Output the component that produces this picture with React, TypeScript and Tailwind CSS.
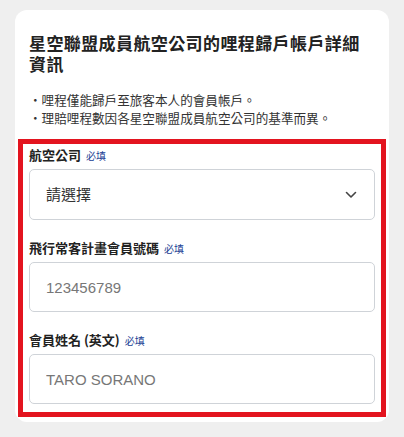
import React from "react";

const font = { fontFamily: '"Noto Sans CJK TC", "Noto Sans", "Liberation Sans", sans-serif' };

function Required() {
  return <span className="ml-[5px] text-[10px] font-normal text-[#1c3f94]">必填</span>;
}

function Label({ children }: { children: React.ReactNode }) {
  return (
    <div className="flex items-baseline text-[13px] leading-[18px] font-bold text-[#222]">
      {children}
      <Required />
    </div>
  );
}

function TextInput({ placeholder }: { placeholder: string }) {
  return (
    <input
      placeholder={placeholder}
      className="mt-[4px] h-[50px] w-full rounded-[5px] border border-[#cfd3d8] bg-white px-[16px] text-[15px] text-[#222] outline-none placeholder:text-[#777]"
      style={{ fontFamily: '"Liberation Sans", "Noto Sans CJK TC", sans-serif' }}
    />
  );
}

export default function App() {
  return (
    <div className="min-h-[437px] bg-[#efefef] px-[15px] pt-[10px] pb-[15px]" style={font}>
      <div className="rounded-[12px] bg-white px-[14px] pt-[22px] pb-[5px]">
        <h2 className="pr-[8px] text-[17px] leading-[21px] font-bold tracking-[0.4px] text-[#222]">
          星空聯盟成員航空公司的哩程歸戶帳戶詳細資訊
        </h2>

        <ul className="mt-[17px] text-[12.6px] leading-[18px] text-[#333]">
          <li>・哩程僅能歸戶至旅客本人的會員帳戶。</li>
          <li>・理賠哩程數因各星空聯盟成員航空公司的基準而異。</li>
        </ul>

        <div className="mx-[-11px] mt-[12px] border-[5px] border-[#e3141f] px-[6px] pt-[2px] pb-[8px]">
          <Label>航空公司</Label>
          <div className="mt-[4px] flex h-[51px] w-full items-center justify-between rounded-[5px] border border-[#cfd3d8] bg-white pr-[17px] pl-[16px]">
            <span className="text-[15px] text-[#333]">請選擇</span>
            <svg width="12" height="8" viewBox="0 0 12 8" fill="none">
              <path d="M1.5 1.5L6 6L10.5 1.5" stroke="#444" strokeWidth="1.6" strokeLinecap="round" strokeLinejoin="round" />
            </svg>
          </div>

          <div className="mt-[19px]">
            <Label>飛行常客計畫會員號碼</Label>
            <TextInput placeholder="123456789" />
          </div>

          <div className="mt-[19px]">
            <Label>會員姓名 (英文)</Label>
            <TextInput placeholder="TARO SORANO" />
          </div>
        </div>
      </div>
    </div>
  );
}
